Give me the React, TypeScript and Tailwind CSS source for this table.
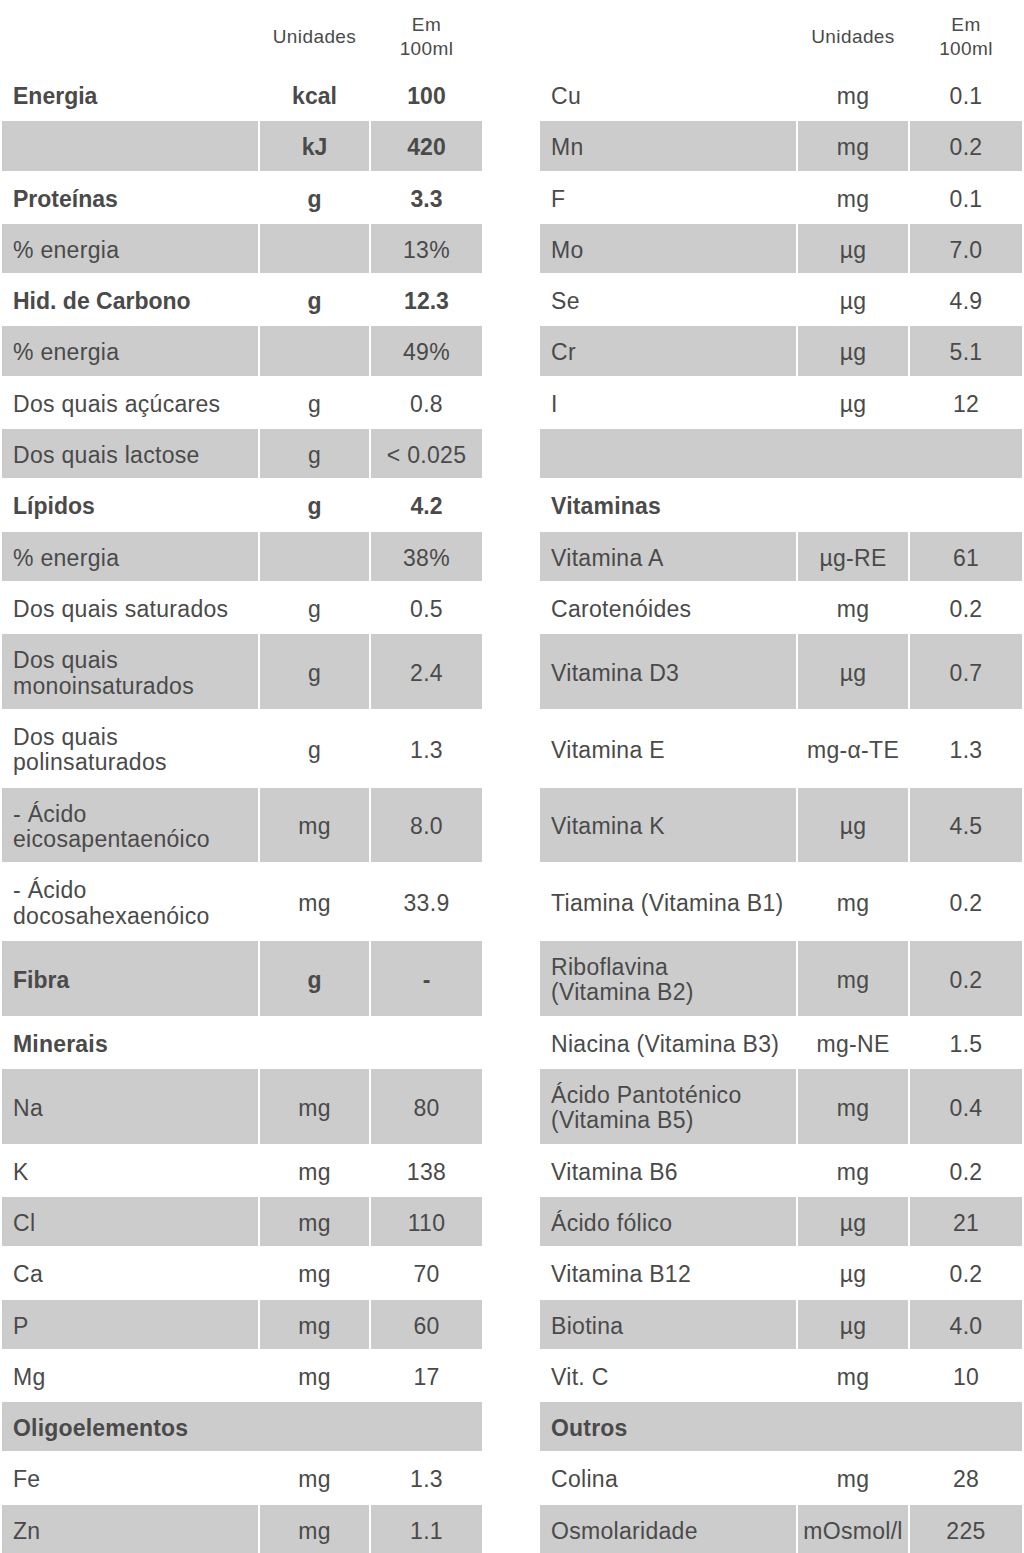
import React from 'react';

type Cell = { label?: string; unit?: string; value?: string; bold?: boolean; section?: boolean };
type Row = { tall?: boolean; left: Cell; right: Cell };

const rows: Row[] = [
  { left: { label: 'Energia', unit: 'kcal', value: '100', bold: true }, right: { label: 'Cu', unit: 'mg', value: '0.1' } },
  { left: { label: '', unit: 'kJ', value: '420', bold: true }, right: { label: 'Mn', unit: 'mg', value: '0.2' } },
  { left: { label: 'Proteínas', unit: 'g', value: '3.3', bold: true }, right: { label: 'F', unit: 'mg', value: '0.1' } },
  { left: { label: '% energia', unit: '', value: '13%' }, right: { label: 'Mo', unit: 'µg', value: '7.0' } },
  { left: { label: 'Hid. de Carbono', unit: 'g', value: '12.3', bold: true }, right: { label: 'Se', unit: 'µg', value: '4.9' } },
  { left: { label: '% energia', unit: '', value: '49%' }, right: { label: 'Cr', unit: 'µg', value: '5.1' } },
  { left: { label: 'Dos quais açúcares', unit: 'g', value: '0.8' }, right: { label: 'I', unit: 'µg', value: '12' } },
  { left: { label: 'Dos quais lactose', unit: 'g', value: '< 0.025' }, right: { section: true, label: '' } },
  { left: { label: 'Lípidos', unit: 'g', value: '4.2', bold: true }, right: { section: true, label: 'Vitaminas' } },
  { left: { label: '% energia', unit: '', value: '38%' }, right: { label: 'Vitamina A', unit: 'µg-RE', value: '61' } },
  { left: { label: 'Dos quais saturados', unit: 'g', value: '0.5' }, right: { label: 'Carotenóides', unit: 'mg', value: '0.2' } },
  { tall: true, left: { label: 'Dos quais\nmonoinsaturados', unit: 'g', value: '2.4' }, right: { label: 'Vitamina D3', unit: 'µg', value: '0.7' } },
  { tall: true, left: { label: 'Dos quais\npolinsaturados', unit: 'g', value: '1.3' }, right: { label: 'Vitamina E', unit: 'mg-α-TE', value: '1.3' } },
  { tall: true, left: { label: '- Ácido\neicosapentaenóico', unit: 'mg', value: '8.0' }, right: { label: 'Vitamina K', unit: 'µg', value: '4.5' } },
  { tall: true, left: { label: '- Ácido\ndocosahexaenóico', unit: 'mg', value: '33.9' }, right: { label: 'Tiamina (Vitamina B1)', unit: 'mg', value: '0.2' } },
  { tall: true, left: { label: 'Fibra', unit: 'g', value: '-', bold: true }, right: { label: 'Riboflavina\n(Vitamina B2)', unit: 'mg', value: '0.2' } },
  { left: { section: true, label: 'Minerais' }, right: { label: 'Niacina (Vitamina B3)', unit: 'mg-NE', value: '1.5' } },
  { tall: true, left: { label: 'Na', unit: 'mg', value: '80' }, right: { label: 'Ácido Pantoténico\n(Vitamina B5)', unit: 'mg', value: '0.4' } },
  { left: { label: 'K', unit: 'mg', value: '138' }, right: { label: 'Vitamina B6', unit: 'mg', value: '0.2' } },
  { left: { label: 'Cl', unit: 'mg', value: '110' }, right: { label: 'Ácido fólico', unit: 'µg', value: '21' } },
  { left: { label: 'Ca', unit: 'mg', value: '70' }, right: { label: 'Vitamina B12', unit: 'µg', value: '0.2' } },
  { left: { label: 'P', unit: 'mg', value: '60' }, right: { label: 'Biotina', unit: 'µg', value: '4.0' } },
  { left: { label: 'Mg', unit: 'mg', value: '17' }, right: { label: 'Vit. C', unit: 'mg', value: '10' } },
  { left: { section: true, label: 'Oligoelementos' }, right: { section: true, label: 'Outros' } },
  { left: { label: 'Fe', unit: 'mg', value: '1.3' }, right: { label: 'Colina', unit: 'mg', value: '28' } },
  { left: { label: 'Zn', unit: 'mg', value: '1.1' }, right: { label: 'Osmolaridade', unit: 'mOsmol/l', value: '225' } },
];

const Side = ({ cell, shaded, tall }: { cell: Cell; shaded: boolean; tall?: boolean }) => {
  const bg = shaded ? 'bg-[#cccccc]' : 'bg-white';
  const h = tall ? 'h-[74.7px]' : 'h-[49.3px]';
  if (cell.section) {
    return (
      <td colSpan={3} className={`${bg} ${h} pl-[11px] pt-[4px] align-middle font-bold tracking-[0.2px]`}>
        {cell.label}
      </td>
    );
  }
  const weight = cell.bold ? 'font-bold' : 'font-normal tracking-[0.3px]';
  return (
    <>
      <td className={`${bg} ${h} pl-[11px] pr-1 pt-[4px] align-middle whitespace-pre-line ${weight}`}>{cell.label}</td>
      <td className={`${bg} ${h} pt-[4px] text-center align-middle whitespace-nowrap ${weight}`}>{cell.unit}</td>
      <td className={`${bg} ${h} pt-[4px] text-center align-middle whitespace-nowrap ${weight}`}>{cell.value}</td>
    </>
  );
};

const Head = () => (
  <>
    <th className="h-[66px]" />
    <th className="h-[66px] pt-[4px] text-center align-middle font-normal">Unidades</th>
    <th className="h-[66px] pt-[4px] text-center align-middle font-normal">
      Em
      <br />
      100ml
    </th>
  </>
);

export default function App() {
  return (
    <div className="w-[1024px] bg-white text-[#4a4a4a] font-['Liberation_Sans',Arial,sans-serif]">
      <table className="w-[1024px] table-fixed border-separate border-spacing-x-[2px] border-spacing-y-[2px] text-[23px] leading-[25.4px]">
        <colgroup>
          <col className="w-[256px]" />
          <col className="w-[109px]" />
          <col className="w-[111px]" />
          <col className="w-[54px]" />
          <col className="w-[256px]" />
          <col className="w-[110px]" />
          <col className="w-[112px]" />
        </colgroup>
        <thead>
          <tr className="text-[19px] leading-[24px] tracking-[0.4px]">
            <Head />
            <th />
            <Head />
          </tr>
        </thead>
        <tbody>
          {rows.map((r, i) => (
            <tr key={i}>
              <Side cell={r.left} shaded={i % 2 === 1} tall={r.tall} />
              <td className="bg-white" />
              <Side cell={r.right} shaded={i % 2 === 1} tall={r.tall} />
            </tr>
          ))}
        </tbody>
      </table>
    </div>
  );
}
